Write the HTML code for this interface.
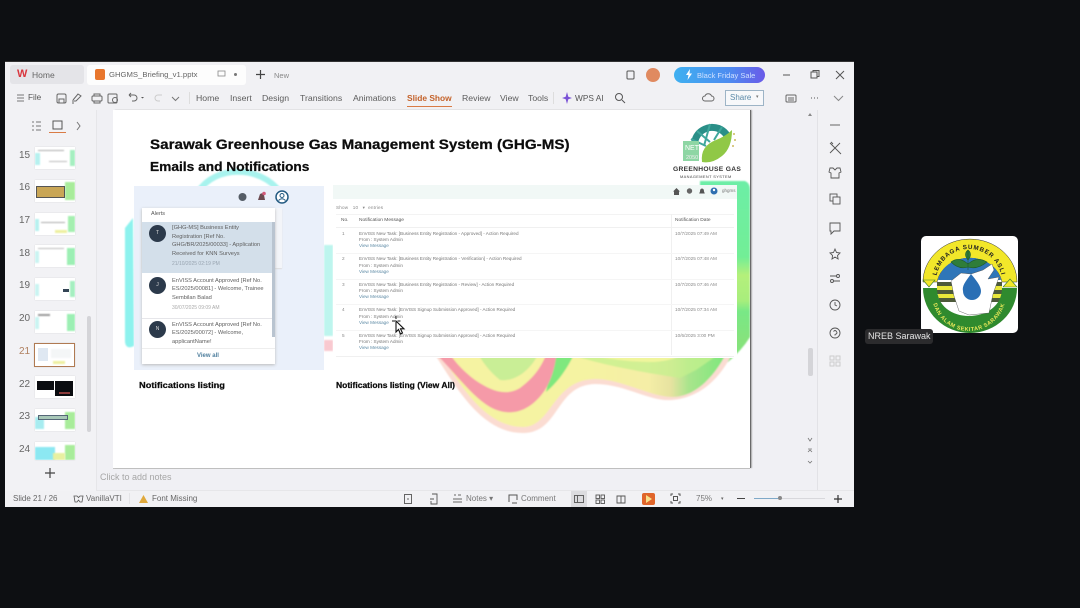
<!DOCTYPE html>
<html><head><meta charset="utf-8"><style>
html,body{margin:0;padding:0;background:#0d0f12;width:1080px;height:608px;overflow:hidden}
body{position:relative;font-family:"Liberation Sans",sans-serif;filter:blur(.3px)}
.a,.t{position:absolute}
.t{white-space:nowrap;line-height:1}
svg{position:absolute;overflow:visible}
.m{font-size:8.700px;color:#5c5c5c;top:94px}
.n{font-size:10px;color:#666;left:19px}
.th{position:absolute;left:35px;width:40px;height:22px;background:#fff;overflow:hidden;box-shadow:0 0 1px #ccc}
.th i{position:absolute;display:block;filter:blur(.8px)}
.l{font-size:4.600px;color:#777;left:359px}
.lk{font-size:4.600px;color:#5e8ba6;left:359px}
.d{font-size:4.700px;color:#888;left:675px}
.al{font-size:5.700px;color:#5f5f5f;left:172px}
.av{position:absolute;width:17px;height:17px;border-radius:50%;background:#2c3a4b;left:149px;color:#ddd;font-size:5px;line-height:17px;text-align:center}
.hd{font-weight:bold;color:#0c0c0c;-webkit-text-stroke:.25px #0c0c0c;transform-origin:0 50%}
</style></head><body>
<!-- window -->
<div class="a" style="left:5px;top:62px;width:849px;height:445px;background:#f1f1f4"></div>
<div class="a" style="left:5px;top:61px;width:849px;height:1px;background:#333"></div>
<!-- tabs -->
<div class="a" style="left:10px;top:65px;width:74px;height:19px;background:#e4e4e8;border-radius:3px"></div>
<div class="t" style="left:17px;top:69px;font-size:11px;font-weight:bold;color:#d9363e">W</div>
<div class="t" style="left:32px;top:71px;font-size:8.500px;color:#666">Home</div>
<div class="a" style="left:87px;top:65px;width:159px;height:20px;background:#fdfdfd;border-radius:3px"></div>
<div class="a" style="left:95px;top:69px;width:10px;height:11px;background:#e8762d;border-radius:2px"></div>
<div class="t" style="left:109px;top:71px;font-size:7.700px;color:#666">GHGMS_Briefing_v1.pptx</div>
<svg style="left:217px;top:70px" width="10" height="9"><rect x="1" y="1" width="7" height="5" stroke="#888" fill="none" stroke-width=".8"/></svg>
<div class="a" style="left:234px;top:73px;width:3px;height:3px;border-radius:50%;background:#777"></div>
<svg style="left:255px;top:69px" width="11" height="11"><path d="M5.500 1v9M1 5.500h9" stroke="#444" stroke-width="1.200"/></svg>
<div class="t" style="left:274px;top:72px;font-size:7.500px;color:#888">New</div>
<svg style="left:626px;top:70px" width="10" height="10"><rect x="1" y="1" width="7" height="8" rx="1" stroke="#555" fill="none"/></svg>
<div class="a" style="left:646px;top:68px;width:14px;height:14px;border-radius:50%;background:#e08a60"></div>
<div class="a" style="left:674px;top:67px;width:91px;height:16px;border-radius:8px;background:linear-gradient(90deg,#3fb0f0,#4d8cf0 60%,#6a5ae8)"></div>
<div class="t" style="left:697px;top:71.500px;font-size:7.500px;color:#cfe0ff">Black Friday Sale</div>
<svg style="left:685px;top:69px" width="8" height="11"><path d="M5 0L1 6h2.500L2.500 11 7 4.500H4.500z" fill="#fff"/></svg>
<svg style="left:782px;top:70px" width="62" height="10"><path d="M1 5h7" stroke="#555"/><rect x="29" y="2" width="6" height="6" stroke="#555" fill="none"/><path d="M31 2V0.500h6v6h-2" stroke="#555" fill="none"/><path d="M54 1l8 8M62 1l-8 8" stroke="#555"/></svg>
<!-- menu -->
<svg style="left:17px;top:94px" width="8" height="9"><path d="M0 1h7M0 4h7M0 7h7" stroke="#777"/></svg>
<div class="t m" style="left:28px;color:#555;font-size:8.200px">File</div>
<svg style="left:56px;top:92px" width="125" height="13"><g stroke="#666" fill="none"><rect x="1" y="2" width="9" height="9" rx="1.500"/><path d="M3 11V7h5v4"/><path d="M17 8l5-6 3 2-5 5h-2M17 8v4"/><rect x="36" y="4" width="10" height="5" rx="1"/><path d="M38 4V2h6v2M38 9v2h6V9"/><rect x="52" y="2" width="9" height="9" rx="1"/><circle cx="59" cy="8" r="2.500"/><path d="M73 3h5a3 3 0 0 1 0 6h-2M73 3l2-2M73 3l2 2"/></g><path d="M85 5l1.500 1.500L88 5" fill="#555"/><g stroke="#ccc" fill="none"><path d="M106 3h-4a3 3 0 0 0 0 6h2"/></g><path d="M116 5l3.500 3.500L123 5" stroke="#777" fill="none"/></svg>
<div class="a" style="left:189px;top:92px;width:1px;height:12px;background:#ddd"></div>
<div class="t m" style="left:196px">Home</div>
<div class="t m" style="left:230px">Insert</div>
<div class="t m" style="left:262px">Design</div>
<div class="t m" style="left:300px">Transitions</div>
<div class="t m" style="left:353px">Animations</div>
<div class="t m" style="left:407px;color:#c4622a;font-weight:bold;font-size:8.400px">Slide Show</div>
<div class="a" style="left:407px;top:106px;width:45px;height:1px;background:#d97b45"></div>
<div class="t m" style="left:462px">Review</div>
<div class="t m" style="left:500px">View</div>
<div class="t m" style="left:528px">Tools</div>
<div class="a" style="left:553px;top:92px;width:1px;height:12px;background:#ddd"></div>
<svg style="left:562px;top:92px" width="10" height="12"><path d="M5 0l1.300 4.700L10 6 6.300 7.300 5 12 3.700 7.300 0 6 3.700 4.700z" fill="#7a52d6"/></svg>
<div class="t m" style="left:575px;color:#555;font-size:8.300px">WPS AI</div>
<svg style="left:614px;top:92px" width="12" height="12"><circle cx="5" cy="5" r="3.500" stroke="#555" fill="none"/><path d="M8 8l3 3" stroke="#555"/></svg>
<svg style="left:702px;top:93px" width="13" height="10"><path d="M3 8a2.500 2.500 0 0 1 0-5 3.500 3.500 0 0 1 6.500 0 2.500 2.500 0 0 1 0 5z" stroke="#666" fill="none"/></svg>
<div class="a" style="left:725px;top:90px;width:39px;height:16px;border:1px solid #9db4c6;box-sizing:border-box;background:#f7f8fa"></div>
<div class="t" style="left:730px;top:94px;font-size:8px;color:#5a89a8">Share</div>
<div class="t" style="left:756px;top:95px;font-size:5px;color:#777">▾</div>
<svg style="left:785px;top:92px" width="60" height="12"><g stroke="#666" fill="none"><rect x="1" y="3" width="10" height="7" rx="1"/><path d="M3 6h6M3 8h6"/></g><path d="M26 6h1M29 6h1M32 6h1" stroke="#555"/><path d="M49 4l4.500 4.500L58 4" stroke="#888" fill="none"/></svg>
<!-- left pane -->
<div class="a" style="left:5px;top:110px;width:91px;height:381px;background:#f2f2f5"></div>
<div class="a" style="left:96px;top:110px;width:1px;height:381px;background:#e6e6e9"></div>
<svg style="left:31px;top:120px" width="55" height="13"><g stroke="#777" fill="none"><path d="M1 2h2M1 6h2M1 10h2M5 2h5M5 6h5M5 10h5"/><rect x="22" y="1" width="9" height="8" stroke="#555"/><path d="M46 2l3 4-3 4"/></g></svg>
<div class="a" style="left:49px;top:132px;width:17px;height:1px;background:#d97b45"></div>
<div class="t n" style="top:151px">15</div><div class="t n" style="top:183px">16</div><div class="t n" style="top:216px">17</div><div class="t n" style="top:249px">18</div><div class="t n" style="top:281px">19</div><div class="t n" style="top:314px">20</div><div class="t n" style="top:347px;color:#b08060">21</div><div class="t n" style="top:380px">22</div><div class="t n" style="top:412px">23</div><div class="t n" style="top:445px">24</div>
<div class="th" style="top:147px"><i style="right:0;top:3px;width:5px;height:16px;background:#a5efc0"></i><i style="left:0;top:6px;width:5px;height:12px;background:#b6f1ef"></i><i style="left:3px;top:3px;width:26px;height:1px;background:#aaa"></i><i style="left:14px;top:14px;width:18px;height:1px;background:#bbb"></i></div>
<div class="th" style="top:180px"><i style="right:0;top:2px;width:10px;height:18px;background:#a8ec9a"></i><i style="left:1px;top:6px;width:29px;height:12px;background:#c9a656;filter:none;border:1px solid #555;box-sizing:border-box"></i></div>
<div class="th" style="top:213px"><i style="right:0;top:3px;width:7px;height:16px;background:#a5efb0"></i><i style="left:0;top:6px;width:4px;height:12px;background:#b6f1ef"></i><i style="left:20px;bottom:2px;width:12px;height:3px;background:#eef0a0"></i><i style="left:6px;top:9px;width:24px;height:1px;background:#aaa"></i></div>
<div class="th" style="top:245px"><i style="right:0;top:3px;width:8px;height:17px;background:#9cefb4"></i><i style="left:0;top:6px;width:4px;height:12px;background:#c9f4f2"></i><i style="left:3px;top:3px;width:26px;height:1px;background:#bbb"></i></div>
<div class="th" style="top:278px"><i style="right:0;top:3px;width:5px;height:16px;background:#a5efc0"></i><i style="left:0;top:6px;width:4px;height:12px;background:#c9f4f2"></i><i style="left:28px;top:11px;width:6px;height:3px;background:#345;filter:none"></i></div>
<div class="th" style="top:311px"><i style="right:0;top:3px;width:8px;height:17px;background:#9cefb4"></i><i style="left:0;top:6px;width:4px;height:12px;background:#c9f4f2"></i><i style="left:3px;top:3px;width:12px;height:2px;background:#999"></i></div>
<div class="th" style="top:343px;left:34px;width:41px;height:24px;border:1px solid #b07a52;box-sizing:border-box"><i style="left:3px;top:4px;width:10px;height:13px;background:#dfe8f2;filter:none"></i><i style="left:16px;top:5px;width:20px;height:9px;background:#f4f6f7"></i><i style="left:18px;bottom:2px;width:12px;height:3px;background:#eef0a0"></i></div>
<div class="th" style="top:376px"><i style="left:2px;top:5px;width:17px;height:9px;background:#0a0c10;filter:none"></i><i style="left:20px;top:5px;width:18px;height:15px;background:#0a0c10;filter:none"></i><i style="left:24px;top:16px;width:11px;height:2px;background:#8a3a3a;filter:none"></i></div>
<div class="th" style="top:409px"><i style="right:0;top:3px;width:10px;height:17px;background:#a8ec9a"></i><i style="left:0;top:8px;width:9px;height:12px;background:#a7ecf0"></i><i style="left:3px;top:6px;width:30px;height:5px;background:#a8c8b8;border:1px solid #567;box-sizing:border-box;filter:none"></i></div>
<div class="th" style="top:442px;height:18px"><i style="right:0;top:3px;width:10px;height:15px;background:#a8ec9a"></i><i style="left:0;top:5px;width:20px;height:13px;background:#8ce8f2"></i><i style="left:18px;top:11px;width:12px;height:7px;background:#e8f0a0"></i></div>
<div class="a" style="left:87px;top:316px;width:4px;height:116px;background:#d4d4d8;border-radius:2px"></div>
<svg style="left:44px;top:467px" width="12" height="12"><path d="M6 1v10M1 6h10" stroke="#444" stroke-width="1.200"/></svg>
<!-- slide surround -->
<div class="a" style="left:97px;top:110px;width:720px;height:380px;background:#f0f0f4"></div>
<div class="a" style="left:817px;top:110px;width:1px;height:381px;background:#e2e2e6"></div>
<!-- slide -->
<div class="a" style="left:113px;top:110px;width:637px;height:358px;background:#fff;box-shadow:1px 0 0 #6a6a6a,2px 0 1px #aaa,0 1px 0 #c4c4c4;overflow:hidden"></div>
<svg style="left:113px;top:110px" width="637" height="358" viewBox="113 110 637 358">
<defs>
<clipPath id="sc"><rect x="113" y="110" width="637" height="358"/></clipPath>
<filter id="b"><feGaussianBlur stdDeviation=".7"/></filter>
<linearGradient id="rg" x1="0" x2="0" y1="0" y2="1"><stop offset="0" stop-color="#6ceea6"/><stop offset=".42" stop-color="#72ee96"/><stop offset=".52" stop-color="#b4f07a"/><stop offset=".66" stop-color="#a8ee7c"/><stop offset=".72" stop-color="#78e886"/><stop offset=".88" stop-color="#86e27c"/><stop offset="1" stop-color="#7fe67c"/></linearGradient>
<linearGradient id="yg" gradientUnits="userSpaceOnUse" x1="590" x2="735" y1="0" y2="0"><stop offset="0" stop-color="#f5f3a2"/><stop offset=".4" stop-color="#f5eea6"/><stop offset=".56" stop-color="#e6e2a0"/><stop offset=".68" stop-color="#a9e48c"/><stop offset="1" stop-color="#72e878"/></linearGradient>
</defs>
<g clip-path="url(#sc)">
<g filter="url(#b)">
<path d="M198 192C215 165 260 165 280 192" fill="none" stroke="#a8f3ee" stroke-width="6"/>
<path d="M133 218L125 228V342Q126 350 134 346z" fill="#8df2ee"/>
<path d="M324 245H333V336H324z" fill="#bdf5ee"/>
<path d="M324 340H333V351H324z" fill="#f9c9d0"/>
<path d="M716 181H745Q750 183 750 190V337Q742 350 728 362H700V181z" fill="url(#rg)"/>
<path d="M432 350C455 385 480 433 523 433C560 433 555 385 595 384C625 384 650 402 672 400C695 398 715 385 730 358V350Z" fill="#fbdcd2"/>
<path d="M438 350C460 385 485 427 523 427C552 427 552 380 595 379C622 379 650 397 672 397C692 397 712 382 728 350Z" fill="url(#yg)"/>
<path d="M560 350C585 362 640 372 680 378L696 370L725 350Z" fill="#c4f08e" opacity=".75"/>
<path d="M570 350C600 358 625 362 650 362C665 362 680 358 690 350Z" fill="#f0f59c"/>
<path d="M555 350H576C568 368 558 382 546 392Z" fill="#7fe87e"/>
<path d="M476 350H540C532 370 515 382 500 380C490 372 482 362 476 350Z" fill="#c9ee96"/>
<path d="M432 350C455 372 470 395 490 407C510 418 530 412 545 390C552 378 555 368 557 350H548C540 372 530 380 520 388C505 397 490 390 475 380C462 370 455 362 447 350Z" fill="#f59aa8"/>
</g>
</g>
</svg>
<div class="t hd" style="left:150px;top:137px;font-size:14px;transform:scaleX(1.085)">Sarawak Greenhouse Gas Management System (GHG-MS)</div>
<div class="t hd" style="left:150px;top:160.500px;font-size:12.600px;transform:scaleX(1.09)">Emails and Notifications</div>
<!-- logo -->
<svg style="left:680px;top:122px" width="60" height="44" viewBox="0 0 60 44">
<path d="M11 20Q14 5 30 2Q44 1 51 13L45 17Q40 8 30 9Q20 11 18 21z" fill="#2a8f88"/>
<path d="M17 9L30 20M30 2L24 24M42 5L34 18M11 17L26 24" stroke="#3fa79c" stroke-width="2"/>
<path d="M3 19H19V39H3z" fill="#8ed6a4"/>
<path d="M22 40Q20 24 36 18Q46 14 52 8Q52 26 42 34Q32 42 22 40z" fill="#90c846"/>
<circle cx="54" cy="12" r="1" fill="#cdb95f"/><circle cx="55" cy="18" r="1" fill="#cdb95f"/><circle cx="53" cy="24" r="1" fill="#cdb95f"/>
<text x="5" y="28" font-size="7" font-family="Liberation Sans" fill="#fff">NET</text>
<text x="6" y="37" font-size="5.500" font-family="Liberation Sans" fill="#eee">2050</text>
</svg>
<div class="t" style="left:673px;top:166.500px;font-size:6.700px;font-weight:bold;color:#333;letter-spacing:.3px">GREENHOUSE GAS</div>
<div class="t" style="left:680px;top:175px;font-size:3.900px;color:#444;letter-spacing:.4px">MANAGEMENT SYSTEM</div>
<!-- alerts panel -->
<div class="a" style="left:134px;top:186px;width:190px;height:184px;background:#eaf0fa"></div>
<div class="a" style="left:142px;top:208px;width:140px;height:60px;background:#f3f5f9;box-shadow:0 1px 1px #ddd"></div>
<div class="a" style="left:142px;top:208px;width:133px;height:156px;background:#fff;box-shadow:0 1px 3px #bbb;overflow:hidden">
<div class="a" style="left:0;top:14px;width:133px;height:51px;background:#d3dfea"></div>
<div class="a" style="left:0;top:110px;width:133px;height:1px;background:#e6e6ea"></div>
<div class="a" style="left:0;top:140px;width:133px;height:16px;background:#fff;border-top:1px solid #eee"></div>
<div class="a" style="left:130px;top:14px;width:3px;height:115px;background:#b9c4d0"></div>
</div>
<svg style="left:236px;top:190px" width="50" height="14"><circle cx="6.500" cy="7" r="4" fill="#555d66"/><path d="M24 4q3-2 4 1l1 5h-7z" fill="#6b4a50"/><circle cx="28" cy="3.500" r="1.800" fill="#d25a7a"/><circle cx="46" cy="7" r="6" fill="#fff" stroke="#245b82" stroke-width="1.500"/><circle cx="46" cy="5.500" r="2" fill="none" stroke="#245b82"/><path d="M42.500 10.500q3.500-3.500 7 0" fill="none" stroke="#245b82"/></svg>
<div class="t" style="left:151px;top:211.500px;font-size:5.500px;color:#555">Alerts</div>
<div class="av" style="top:225px">T</div><div class="av" style="top:277px">J</div><div class="av" style="top:321px">N</div>
<div class="t al" style="top:226px">[GHG-MS] Business Entity</div>
<div class="t al" style="top:234.500px">Registration [Ref No.</div>
<div class="t al" style="top:243px">GHG/BR/2025/00033] - Application</div>
<div class="t al" style="top:251.500px">Received for KNN Surveys</div>
<div class="t al" style="top:261.500px;color:#98a4b0;font-size:5px">21/10/2025 02:19 PM</div>
<div class="t al" style="top:278.500px">EnVISS Account Approved [Ref No.</div>
<div class="t al" style="top:287px">ES/2025/00081] - Welcome, Trainee</div>
<div class="t al" style="top:295.500px">Sembilan Balad</div>
<div class="t al" style="top:305.500px;color:#aaa;font-size:5px">30/07/2025 09:09 AM</div>
<div class="t al" style="top:322.500px">EnVISS Account Approved [Ref No.</div>
<div class="t al" style="top:331px">ES/2025/00072] - Welcome,</div>
<div class="t al" style="top:339.500px">applicantName!</div>
<div class="t" style="left:197px;top:353px;font-size:6px;color:#4f7f9e;font-weight:bold">View all</div>
<div class="t hd" style="left:139px;top:381px;font-size:8.500px;transform:scaleX(1.09)">Notifications listing</div>
<!-- table panel -->
<div class="a" style="left:333px;top:185px;width:404px;height:173px;background:#fff"></div>
<div class="a" style="left:333px;top:185px;width:404px;height:14px;background:#f1f8f6"></div>
<svg style="left:672px;top:186px" width="50" height="11"><path d="M4.500 2L1 5.500h1V9h5V5.500h1z" fill="#555"/><circle cx="17.500" cy="5" r="2.700" fill="#666"/><path d="M30 2.500q2 0 2 3l.8 2h-5.600l.8-2q0-3 2-3z" fill="#555"/><circle cx="42" cy="5" r="3.500" fill="#2f6fb0"/><circle cx="42" cy="4" r="1.200" fill="#fff"/></svg>
<div class="t" style="left:722px;top:188.500px;font-size:4.500px;color:#777">ghgms</div>
<div class="t" style="left:336px;top:206px;font-size:4.600px;color:#888;letter-spacing:.2px">Show &nbsp;&nbsp;10 &nbsp;&nbsp;▾&nbsp; entries</div>
<div class="a" style="left:336px;top:214px;width:398px;height:141px;border-top:1px solid #f3f3f3;border-bottom:1px solid #f0f0f0"></div>
<div class="a" style="left:671px;top:214px;width:1px;height:141px;background:#f0f0f0"></div>
<div class="a" style="left:336px;top:227px;width:398px;height:1px;background:#f0f0f0"></div>
<div class="a" style="left:336px;top:253px;width:398px;height:1px;background:#f5f5f5"></div>
<div class="a" style="left:336px;top:279px;width:398px;height:1px;background:#f5f5f5"></div>
<div class="a" style="left:336px;top:304px;width:398px;height:1px;background:#f5f5f5"></div>
<div class="a" style="left:336px;top:330px;width:398px;height:1px;background:#f5f5f5"></div>
<div class="t" style="left:341px;top:218.500px;font-size:4.800px;color:#555">No.</div>
<div class="t" style="left:359px;top:218.500px;font-size:4.850px;color:#555">Notification Message</div>
<div class="t" style="left:675px;top:218.500px;font-size:4.850px;color:#555">Notification Date</div>
<div class="t d" style="left:342px;top:231.700px">1</div>
<div class="t l" style="top:231.700px">EnVISS New Task: [Business Entity Registration - Approved] - Action Required</div><div class="t l" style="top:238px">From : System Admin</div><div class="t lk" style="top:244.400px">View Message</div><div class="t d" style="top:231.700px">10/7/2025 07:49 AM</div>
<div class="t d" style="left:342px;top:257.400px">2</div>
<div class="t l" style="top:257.400px">EnVISS New Task: [Business Entity Registration - Verification] - Action Required</div><div class="t l" style="top:263.700px">From : System Admin</div><div class="t lk" style="top:269.800px">View Message</div><div class="t d" style="top:257.400px">10/7/2025 07:48 AM</div>
<div class="t d" style="left:342px;top:282.700px">3</div>
<div class="t l" style="top:282.700px">EnVISS New Task: [Business Entity Registration - Review] - Action Required</div><div class="t l" style="top:289px">From : System Admin</div><div class="t lk" style="top:295.400px">View Message</div><div class="t d" style="top:282.700px">10/7/2025 07:46 AM</div>
<div class="t d" style="left:342px;top:308.400px">4</div>
<div class="t l" style="top:308.400px">EnVISS New Task: [EnVISS Signup Submission Approved] - Action Required</div><div class="t l" style="top:314.700px">From : System Admin</div><div class="t lk" style="top:320.800px">View Message</div><div class="t d" style="top:308.400px">10/7/2025 07:34 AM</div>
<div class="t d" style="left:342px;top:333.700px">5</div>
<div class="t l" style="top:333.700px">EnVISS New Task: [EnVISS Signup Submission Approved] - Action Required</div><div class="t l" style="top:340px">From : System Admin</div><div class="t lk" style="top:346.400px">View Message</div><div class="t d" style="top:333.700px">10/6/2025 3:00 PM</div>
<div class="t hd" style="left:336px;top:381px;font-size:8.500px">Notifications listing (View All)</div>
<!-- cursor -->
<svg style="left:391px;top:316px" width="16" height="20"><path d="M5 5L5 16L7.500 13.500L9.500 18L11.500 17L9.500 12.800L13 12.800z" fill="#fff" stroke="#111" stroke-width="1.100"/><path d="M5 0v3M1 5h3M6.500 5h3" stroke="#111" stroke-width="1"/></svg>
<!-- scrollbars right -->
<svg style="left:805px;top:112px" width="10" height="350"><path d="M5 1l2 3H3z" fill="#888"/><path d="M3 326l2 3 2-3M3 337h4M3 340l2-2 2 2M3 349l2 2 2-2" fill="none" stroke="#777" stroke-width=".8"/></svg>
<div class="a" style="left:808px;top:348px;width:5px;height:28px;background:#d4d4d8;border-radius:2px"></div>
<!-- right rail -->
<svg style="left:827px;top:118px" width="16" height="250"><g stroke="#555" fill="none" stroke-width=".9"><path d="M3 7h10"/><path d="M3 25l10 10M13 25L3 35M4 24l2 2M12 34l2 2"/><path d="M3 50h3l2 2 2-2h3l1 4-2 1v5H4v-5l-2-1z"/><rect x="3" y="76" width="7" height="7"/><rect x="6" y="79" width="7" height="7" fill="#f1f1f4"/><path d="M3 105h10v8H7l-3 3v-3H3z"/><path d="M8 131l1.500 3.500 3.500.5-2.500 2.500.6 3.500L8 139l-3 2 .6-3.500L3 135l3.500-.5z"/><path d="M3 158h7M6 163h7"/><circle cx="11" cy="158" r="1.500"/><circle cx="5" cy="163" r="1.500"/><circle cx="8" cy="187" r="5"/><path d="M8 184v3l2 1"/><circle cx="8" cy="215" r="5"/><path d="M6.500 213.500q1.500-2 3 0t-1.500 3v1"/></g><g stroke="#ccc" fill="none"><rect x="3" y="238" width="4" height="4"/><rect x="9" y="238" width="4" height="4"/><rect x="3" y="244" width="4" height="4"/><rect x="9" y="244" width="4" height="4"/></g></svg>
<!-- notes + status -->
<div class="t" style="left:100px;top:473px;font-size:9px;color:#a6a6a6">Click to add notes</div>
<div class="a" style="left:97px;top:490px;width:757px;height:1px;background:#e6e6e9"></div>
<div class="t" style="left:13px;top:495px;font-size:8px;color:#666">Slide 21 / 26</div>
<div class="t" style="left:86px;top:495px;font-size:8px;color:#666">VanillaVTI</div>
<svg style="left:73px;top:494px" width="11" height="10"><path d="M1 2h3l1.500 1.500L7 2h3L9 8H7L5.500 6 4 8H2z" stroke="#555" fill="none" stroke-width=".8"/></svg>
<div class="a" style="left:129px;top:493px;width:1px;height:11px;background:#e3e3e6"></div>
<svg style="left:139px;top:495px" width="9" height="8"><path d="M4.500 0L9 8H0z" fill="#e0a93c"/></svg>
<div class="t" style="left:152px;top:495px;font-size:8px;color:#666">Font Missing</div>
<svg style="left:403px;top:493px" width="35" height="12"><g stroke="#555" fill="none" stroke-width=".9"><rect x="1.500" y="1.500" width="7" height="9"/><path d="M4 6h2"/><path d="M29 1h5v10h-6V8M27 6h4"/></g></svg>
<svg style="left:453px;top:494px" width="10" height="10"><path d="M1 1h2M5 1h3M0 5h9M0 8h9" stroke="#666" fill="none"/></svg>
<div class="t" style="left:466px;top:495px;font-size:8px;color:#777">Notes ▾</div>
<svg style="left:508px;top:494px" width="10" height="10"><path d="M1 8V1h8v5M4 9h5" stroke="#555" fill="none"/></svg>
<div class="t" style="left:521px;top:495px;font-size:8px;color:#777">Comment</div>
<div class="a" style="left:571px;top:491px;width:16px;height:16px;background:#dcdcdf"></div>
<svg style="left:574px;top:494px" width="70" height="11"><g stroke="#555" fill="none" stroke-width=".9"><rect x="0.500" y="1.500" width="9" height="7"/><path d="M3.500 1.500v7"/><rect x="22" y="1" width="3.500" height="3.500"/><rect x="27" y="1" width="3.500" height="3.500"/><rect x="22" y="6" width="3.500" height="3.500"/><rect x="27" y="6" width="3.500" height="3.500"/><path d="M43 2h4v7h-4zM47 2h4v7h-4z"/></g></svg>
<div class="a" style="left:642px;top:493px;width:13px;height:12px;background:#e0652a;border-radius:2px"></div>
<svg style="left:645px;top:495px" width="8" height="8"><path d="M1 0l6 4-6 4z" fill="#f8e08a"/></svg>
<svg style="left:670px;top:493px" width="11" height="11"><path d="M1 3V1h2M8 1h2v2M10 8v2H8M3 10H1V8" stroke="#555" fill="none"/><rect x="3.500" y="3.500" width="4" height="4" stroke="#555" fill="none"/></svg>
<div class="t" style="left:696px;top:495px;font-size:8px;color:#777">75%</div>
<div class="t" style="left:721px;top:497px;font-size:5px;color:#666">▾</div>
<div class="a" style="left:737px;top:498px;width:8px;height:1px;background:#444"></div>
<div class="a" style="left:754px;top:498px;width:71px;height:1px;background:#d8d8dc"></div>
<div class="a" style="left:754px;top:498px;width:24px;height:1px;background:#7fa9c8"></div>
<div class="a" style="left:778px;top:496px;width:4px;height:4px;border-radius:50%;background:#888"></div>
<svg style="left:834px;top:495px" width="8" height="8"><path d="M4 0v8M0 4h8" stroke="#333" stroke-width="1.200"/></svg>
<!-- participant tile -->
<div class="a" style="left:921px;top:236px;width:97px;height:97px;background:#fff;border-radius:5px"></div>
<svg style="left:921px;top:236px" width="97" height="97" viewBox="0 0 97 97">
<defs>
<path id="top" d="M15 46A33 33 0 0 1 81 46"/>
<path id="bot" d="M11 58A37 37 0 0 0 85 58"/>
</defs>
<path d="M2 46A46 42 0 0 1 96 46H81A33 29 0 0 0 16 46z" fill="#f2e72a" stroke="#333" stroke-width=".5"/>
<path d="M17 44A32 27 0 0 1 80 44z" fill="#2f76b8"/>
<path d="M2 44H14L8 51zM82 51L89 43L96 51z" fill="#f2e72a" stroke="#3a7a30" stroke-width=".6"/>
<path d="M16 46H34V50H16zM16 54H34V58H16zM18 62H36V66H18zM66 46H81V50H66zM66 54H81V58H66zM64 62H79V66H64z" fill="#4d5a3a"/>
<path d="M16 50H34V54H16zM17 58H35V62H17zM66 50H81V54H66zM66 58H81V62H66z" fill="#e9e73a"/>
<path d="M2 52A46 44 0 0 0 96 52H81C81 70 65 80 48 80C31 80 16 70 16 52Z" fill="#2f8a2e"/>
<path d="M30 45L40 37L50 38L62 34L71 28L73 34L67 43L78 41L72 58L68 77L48 79L38 75L33 60Z" fill="#fff" stroke="#444" stroke-width=".4"/>
<path d="M50 38C44 46 41 50 42 55A9 9 0 0 0 60 55C60 50 55 44 50 38Z" fill="#2a6fb5"/>
<path d="M47 15V34M47 28Q38 20 30 26Q38 34 47 31M47 28Q56 20 66 26Q56 34 47 31M47 24Q42 18 47 14Q52 18 47 24" fill="#2f7d3a" stroke="#1f5a2a" stroke-width=".6"/>
<text font-size="6.200" font-weight="bold" font-family="Liberation Sans" fill="#222" letter-spacing=".8" text-anchor="middle"><textPath href="#top" startOffset="50%">LEMBAGA SUMBER ASLI</textPath></text>
<text font-size="5.500" font-weight="bold" font-family="Liberation Sans" fill="#e8e85a" letter-spacing=".5" text-anchor="middle"><textPath href="#bot" startOffset="50%">DAN ALAM SEKITAR SARAWAK</textPath></text>
</svg>
<div class="a" style="left:865px;top:329px;width:68px;height:15px;background:#2b2b2d;border-radius:3px"></div>
<div class="t" style="left:868px;top:332px;font-size:9px;color:#e4e4e4">NREB Sarawak</div>
</body></html>
